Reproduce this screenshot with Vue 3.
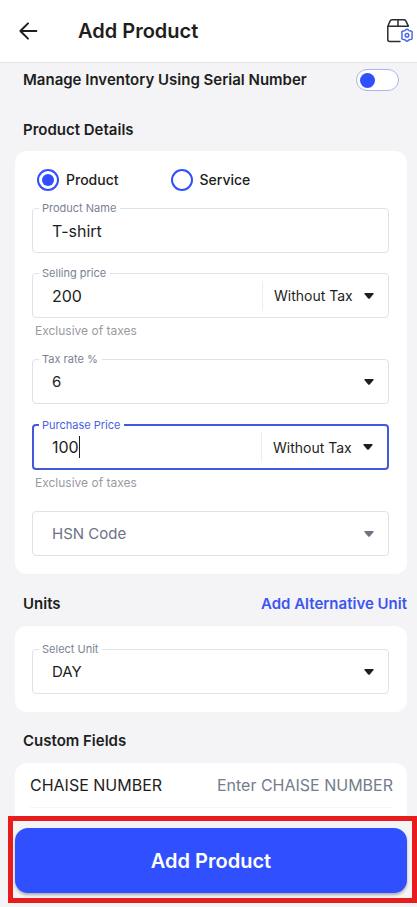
<script setup>
import { ref } from 'vue'

const serialTracking = ref(false)
const kind = ref('product')
const name = ref('T-shirt')
const sellingPrice = ref('200')
const sellingTax = ref('Without Tax')
const taxRate = ref('6')
const purchasePrice = ref('100')
const purchaseTax = ref('Without Tax')
const hsn = ref('')
const unit = ref('DAY')
const chaise = ref('')
</script>

<template>
  <div class="page">
    <header class="topbar">
      <button class="icon-btn" type="button" aria-label="Back">
        <svg width="20" height="20" viewBox="0 0 20 20" fill="none" stroke="#1d1e20" stroke-width="2" stroke-linecap="round" stroke-linejoin="round">
          <path d="M18.4 10H2.4M10 2.4 2.4 10l7.6 7.6" />
        </svg>
      </button>
      <h1>Add Product</h1>
      <button class="icon-btn settings" type="button" aria-label="Product settings">
        <svg width="28" height="26" viewBox="0 0 28 26" fill="none" stroke-linecap="round" stroke-linejoin="round">
          <path d="M1.8 8.2 4.2 2.9Q4.7 1.8 5.9 1.8H18Q19.2 1.8 19.8 2.9L22.4 8.2M1.8 8.2H22.2M12 1.8V8.2M1.8 8.2V21.6Q1.8 23.6 3.8 23.6H14" stroke="#2b2c30" stroke-width="1.5" />
          <g transform="translate(21 17.2)" stroke="#4a67e8" stroke-width="1.5">
            <path d="M-1.5-5.1Q0-6.9 1.5-5.1Q2.2-4.2 3.4-4.3Q5.7-4.2 5.1-2Q4.7-.9 5.2 0Q4.7.9 5.1 2Q5.7 4.2 3.4 4.3Q2.2 4.2 1.5 5.1Q0 6.9-1.5 5.1Q-2.2 4.2-3.4 4.3Q-5.7 4.2-5.1 2Q-4.7.9-5.2 0Q-4.7-.9-5.1-2Q-5.7-4.2-3.4-4.3Q-2.2-4.2-1.5-5.1Z" />
            <circle r="1.8" />
          </g>
        </svg>
      </button>
    </header>

    <main class="content">
      <label class="serial">
        <span class="heading">Manage Inventory Using Serial Number</span>
        <input v-model="serialTracking" class="switch" type="checkbox" role="switch" />
      </label>

      <h2 class="heading section first">Product Details</h2>
      <section class="card details">
        <div class="kinds">
          <label class="kind"><input v-model="kind" type="radio" name="kind" value="product" />Product</label>
          <label class="kind"><input v-model="kind" type="radio" name="kind" value="service" />Service</label>
        </div>

        <div class="group">
          <div class="field">
            <label class="caption" for="name">Product Name</label>
            <input id="name" v-model="name" class="value" type="text" />
          </div>
        </div>

        <div class="group">
          <div class="field">
            <label class="caption" for="selling">Selling price</label>
            <input id="selling" v-model="sellingPrice" class="value" type="text" inputmode="decimal" />
            <div class="picker tax">
              <select v-model="sellingTax" aria-label="Selling price tax">
                <option>Without Tax</option>
                <option>With Tax</option>
              </select>
              <svg class="arrow" width="10" height="6" viewBox="0 0 10 6"><path d="M1 0h8q1 0 .6.9L6 5.3q-1 1-2 0L.4.9Q0 0 1 0Z" /></svg>
            </div>
          </div>
          <p class="hint">Exclusive of taxes</p>
        </div>

        <div class="group">
          <div class="field">
            <label class="caption" for="rate">Tax rate %</label>
            <div class="picker wide">
              <select id="rate" v-model="taxRate" class="value">
                <option>6</option>
                <option>12</option>
                <option>18</option>
              </select>
              <svg class="arrow" width="10" height="6" viewBox="0 0 10 6"><path d="M1 0h8q1 0 .6.9L6 5.3q-1 1-2 0L.4.9Q0 0 1 0Z" /></svg>
            </div>
          </div>
        </div>

        <div class="group">
          <div class="field active">
            <label class="caption" for="purchase">Purchase Price</label>
            <div class="typing">
              <input id="purchase" v-model="purchasePrice" class="value fit" type="text" inputmode="decimal" />
              <span class="caret"></span>
            </div>
            <div class="picker tax">
              <select v-model="purchaseTax" aria-label="Purchase price tax">
                <option>Without Tax</option>
                <option>With Tax</option>
              </select>
              <svg class="arrow" width="10" height="6" viewBox="0 0 10 6"><path d="M1 0h8q1 0 .6.9L6 5.3q-1 1-2 0L.4.9Q0 0 1 0Z" /></svg>
            </div>
          </div>
          <p class="hint">Exclusive of taxes</p>
        </div>

        <div class="group last">
          <div class="field">
            <div class="picker wide muted">
              <select v-model="hsn" class="value" aria-label="HSN Code">
                <option value="">HSN Code</option>
              </select>
              <svg class="arrow" width="10" height="6" viewBox="0 0 10 6"><path d="M1 0h8q1 0 .6.9L6 5.3q-1 1-2 0L.4.9Q0 0 1 0Z" /></svg>
            </div>
          </div>
        </div>
      </section>

      <div class="section split">
        <h2 class="heading">Units</h2>
        <a class="link" href="#">Add Alternative Unit</a>
      </div>
      <section class="card units">
        <div class="field">
          <label class="caption" for="unit">Select Unit</label>
          <div class="picker wide">
            <select id="unit" v-model="unit" class="value">
              <option>DAY</option>
              <option>PCS</option>
            </select>
            <svg class="arrow" width="10" height="6" viewBox="0 0 10 6"><path d="M1 0h8q1 0 .6.9L6 5.3q-1 1-2 0L.4.9Q0 0 1 0Z" /></svg>
          </div>
        </div>
      </section>

      <h2 class="heading section">Custom Fields</h2>
      <section class="card custom">
        <div class="custom-row">
          <label for="chaise">CHAISE NUMBER</label>
          <input id="chaise" v-model="chaise" type="text" placeholder="Enter CHAISE NUMBER" />
        </div>
      </section>
    </main>

    <footer class="actions">
      <div class="highlight">
        <button class="submit" type="button">Add Product</button>
      </div>
    </footer>
  </div>
</template>

<style>
body {
  margin: 0;
  background: #f4f4f7;
}
</style>

<style scoped>
* {
  box-sizing: border-box;
}

.page {
  display: flex;
  flex-direction: column;
  height: 100vh;
  background: #f4f4f7;
  color: #1d1e20;
  font-family: Inter, "Liberation Sans", sans-serif;
  font-size: 16px;
}

h1,
h2,
p {
  margin: 0;
}

input,
select,
button {
  margin: 0;
  padding: 0;
  border: 0;
  background: transparent;
  color: inherit;
  font: inherit;
  outline: none;
}

.topbar {
  display: flex;
  flex: none;
  align-items: center;
  height: 63px;
  padding: 0 3px 0 18px;
  border-bottom: 1px solid #dfe6ed;
  background: #fff;
}

.topbar h1 {
  flex: 1;
  margin-left: 40px;
  font-size: 20px;
  font-weight: 600;
  line-height: 24px;
}

.icon-btn {
  display: flex;
}

.content {
  flex: 1;
  min-height: 0;
  overflow: hidden auto;
  padding: 6px 10px 0 15px;
  scrollbar-width: none;
}

.heading {
  font-size: 15px;
  font-weight: 600;
  line-height: 22px;
}

.serial {
  display: flex;
  align-items: center;
  justify-content: space-between;
  padding: 0 8px;
}

.switch {
  display: flex;
  align-items: center;
  width: 43px;
  height: 22px;
  padding: 0 3px;
  border: 1px solid #a9b3f2;
  border-radius: 11px;
  background: #fff;
  appearance: none;
}

.switch::before {
  width: 15px;
  height: 15px;
  border-radius: 50%;
  background: #304ffe;
  content: "";
}

.switch:checked {
  justify-content: flex-end;
}

.section {
  padding: 18px 0 11px 8px;
}

.first {
  padding: 28px 0 10px 8px;
}

.split {
  display: flex;
  justify-content: space-between;
  padding-top: 19px;
}

.card {
  border-radius: 12px;
  background: #fff;
}

.details {
  padding: 18px 18px 18px 17px;
}

.kinds {
  display: flex;
  gap: 52px;
  padding: 0 5px;
  margin-bottom: 17px;
}

.kind {
  display: flex;
  align-items: center;
  gap: 7px;
  font-size: 14px;
  font-weight: 500;
  line-height: 22px;
}

.kind input {
  display: grid;
  place-items: center;
  width: 22px;
  height: 22px;
  border: 2px solid #304ffe;
  border-radius: 50%;
  appearance: none;
}

.kind input:checked::before {
  width: 12px;
  height: 12px;
  border-radius: 50%;
  background: #304ffe;
  content: "";
}

.group {
  margin-bottom: 20px;
}

.group.last {
  margin-bottom: 0;
}

.field {
  position: relative;
  display: flex;
  align-items: center;
  height: 45px;
  border: 1px solid #dde3ea;
  border-radius: 4px;
  background: #fff;
}

.field.active {
  height: 46px;
  border: 2px solid #4159dc;
}

.caption {
  position: absolute;
  top: -8px;
  left: 6px;
  padding: 0 4px 0 3px;
  background: #fff;
  color: #7a8294;
  font-size: 11px;
  line-height: 15px;
}

.active .caption {
  left: 5px;
  color: #4a61e2;
}

.value {
  flex: 1;
  min-width: 0;
  padding-left: 19px;
  height: 30px;
}

.typing {
  display: flex;
  flex: 1;
  align-items: center;
  min-width: 0;
}

.fit {
  flex: none;
  padding-left: 18px;
  field-sizing: content;
  caret-color: transparent;
}

.caret {
  width: 1px;
  height: 22px;
  background: #1d1e20;
}

.picker {
  display: grid;
  align-items: center;
}

.picker select {
  grid-area: 1 / 1;
  width: 100%;
  appearance: none;
}

.arrow {
  grid-area: 1 / 1;
  justify-self: end;
  margin-right: 14px;
  fill: #1d1e20;
  pointer-events: none;
}

.wide {
  flex: 1;
  font-size: 15px;
}

.muted {
  color: #6b7385;
}

.muted .arrow {
  fill: #6b7385;
}

.tax {
  width: 126px;
  height: 30px;
  padding-left: 11px;
  border-left: 1px solid #eceef2;
  font-size: 14px;
  font-weight: 400;
}

.hint {
  margin: 5px 0 0 3px;
  color: #999b9f;
  font-size: 12px;
  line-height: 16px;
}

.units {
  padding: 23px 18px 18px 17px;
}

.link {
  color: #3d55f0;
  font-size: 15px;
  font-weight: 600;
  line-height: 22px;
  text-decoration: none;
}

.custom {
  min-height: 90px;
  padding: 0 14px 0 15px;
}

.custom-row {
  display: flex;
  align-items: center;
  justify-content: space-between;
  height: 45px;
  border-bottom: 1px solid #f4f5f7;
  font-size: 16px;
}

.custom-row input {
  width: 190px;
  text-align: right;
}

.custom-row input::placeholder {
  color: #747c8d;
  opacity: 1;
}

.actions {
  flex: none;
  padding: 0 0 4px 8px;
}

.highlight {
  padding: 7px 5px 5px 2px;
  border: 5px solid #e81c1c;
}

.submit {
  width: 100%;
  height: 65px;
  border-radius: 13px;
  background: #304ffe;
  box-shadow: 0 2px 3px #0000004d;
  color: #fff;
  font-size: 20px;
  font-weight: 600;
}
</style>
